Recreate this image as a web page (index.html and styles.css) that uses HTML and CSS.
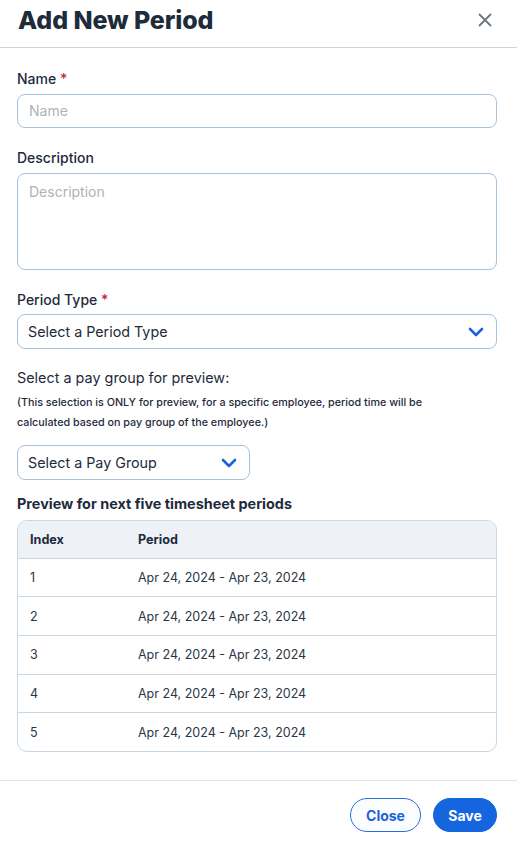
FILE: index.html
```html
<!DOCTYPE html>
<html lang="en">
<head>
<meta charset="utf-8">
<title>Add New Period</title>
<link rel="stylesheet" href="styles.css">
</head>
<body>
<div class="modal">
  <header class="modal-header">
    <h1 class="title">Add New Period</h1>
    <button class="close-x" aria-label="Close">
      <svg width="14" height="14" viewBox="0 0 14 14"><path d="M1.5 1.5 L12.5 12.5 M12.5 1.5 L1.5 12.5" stroke="#6f757d" stroke-width="1.8" stroke-linecap="round" fill="none"/></svg>
    </button>
  </header>
  <main class="modal-body">
    <div class="field">
      <label class="label">Name <span class="req">*</span></label>
      <div class="input"><span class="placeholder">Name</span></div>
    </div>
    <div class="field">
      <label class="label">Description</label>
      <div class="input textarea"><span class="placeholder">Description</span></div>
    </div>
    <div class="field field-tight">
      <label class="label">Period Type <span class="req">*</span></label>
      <div class="select"><span>Select a Period Type</span>
        <svg class="chev" width="16" height="10" viewBox="0 0 16 10"><path d="M2 2 L8 8 L14 2" stroke="#1a63db" stroke-width="2.6" stroke-linecap="round" stroke-linejoin="round" fill="none"/></svg>
      </div>
    </div>
    <p class="pg-title">Select a pay group for preview:</p>
    <p class="pg-note">(This selection is ONLY for preview, for a specific employee, period time will be calculated based on pay group of the employee.)</p>
    <div class="select select-small"><span>Select a Pay Group</span>
      <svg class="chev" width="16" height="10" viewBox="0 0 16 10"><path d="M2 2 L8 8 L14 2" stroke="#1a63db" stroke-width="2.6" stroke-linecap="round" stroke-linejoin="round" fill="none"/></svg>
    </div>
    <h2 class="preview-title">Preview for next five timesheet periods</h2>
    <div class="table-wrap">
      <table class="preview">
        <colgroup><col class="c-index"><col></colgroup>
        <thead><tr><th>Index</th><th>Period</th></tr></thead>
        <tbody>
          <tr><td>1</td><td>Apr 24, 2024 - Apr 23, 2024</td></tr>
          <tr><td>2</td><td>Apr 24, 2024 - Apr 23, 2024</td></tr>
          <tr><td>3</td><td>Apr 24, 2024 - Apr 23, 2024</td></tr>
          <tr><td>4</td><td>Apr 24, 2024 - Apr 23, 2024</td></tr>
          <tr><td>5</td><td>Apr 24, 2024 - Apr 23, 2024</td></tr>
        </tbody>
      </table>
    </div>
  </main>
  <footer class="modal-footer">
    <button class="btn btn-outline">Close</button>
    <button class="btn btn-primary">Save</button>
  </footer>
</div>
</body>
</html>
```
FILE: styles.css
```css
* { box-sizing: border-box; }
html, body { margin: 0; padding: 0; background: #ffffff; }
body {
  font-family: Inter, "Noto Sans", "Liberation Sans", sans-serif;
  color: #1e2b3b;
}
.modal { width: 517px; min-height: 848px; display: flex; flex-direction: column; }

.modal-header {
  height: 48px;
  padding: 6px 25px 0 18px;
  border-bottom: 1px solid #c9d7e3;
  display: flex;
  align-items: flex-start;
  justify-content: space-between;
}
.title {
  margin: 0;
  font-size: 25px;
  line-height: 28px;
  font-weight: 800;
  color: #1d2b3a;
  letter-spacing: -0.1px;
}
.close-x {
  border: 0;
  background: none;
  padding: 0;
  margin-top: 7px;
  width: 14px;
  height: 14px;
  display: flex;
}

.modal-body { padding: 21px 20px 0 17px; }

.field { margin-bottom: 20px; }
.field-tight { margin-bottom: 18px; }
.label {
  display: block;
  font-size: 14px;
  line-height: 20px;
  font-weight: 500;
  color: #1e2b3b;
  margin-bottom: 5px;
}
.field-tight .label { margin-bottom: 4px; }
.req { color: #c8234a; }

.input {
  height: 34px;
  border: 1px solid #a9c2d9;
  border-radius: 8px;
  padding: 0 11px;
  display: flex;
  align-items: center;
  font-size: 14px;
}
.textarea { height: 97px; align-items: flex-start; padding-top: 8px; }
.placeholder { color: #aeb3b9; line-height: 20px; }

.select {
  height: 35px;
  border: 1px solid #a9c2d9;
  border-radius: 8px;
  padding: 0 12px 0 10px;
  display: flex;
  align-items: center;
  justify-content: space-between;
  font-size: 14.3px;
  color: #1e2b3b;
}
.select-small { width: 233px; margin-top: 13px; }
.chev { display: block; }

.pg-title {
  margin: 0;
  font-size: 14.4px;
  line-height: 22px;
  color: #1e2b3b;
}
.pg-note {
  margin: 4px 0 0;
  font-size: 10.75px;
  line-height: 19.5px;
  font-weight: 500;
  color: #1e2b3b;
  max-width: 420px;
}
.preview-title {
  margin: 14px 0 6px;
  font-size: 14.4px;
  line-height: 20px;
  font-weight: 700;
  color: #1e2b3b;
}

.table-wrap {
  border: 1px solid #c6d7e5;
  border-radius: 10px;
  overflow: hidden;
}
.preview {
  width: 100%;
  border-collapse: collapse;
  table-layout: fixed;
  font-size: 12.5px;
}
.c-index { width: 108px; }
.preview th {
  background: #eef2f7;
  height: 37px;
  text-align: left;
  font-weight: 700;
  color: #1e2b3b;
  padding: 0 12px;
  font-size: 12.6px;
}
.preview td {
  height: 38.7px;
  padding: 0 12px;
  border-top: 1px solid #c6d7e5;
  color: #2a3646;
}

.modal-footer {
  margin-top: 28px;
  border-top: 1px solid #e1e3e6;
  padding: 17px 20px 16px;
  display: flex;
  justify-content: flex-end;
  gap: 12px;
}
.btn {
  height: 34px;
  border-radius: 17px;
  font-family: Inter, "Noto Sans", sans-serif;
  font-size: 14px;
  font-weight: 700;
  padding: 0;
  cursor: pointer;
}
.btn-outline {
  width: 71px;
  background: #fbfcfd;
  border: 1px solid #2a6fdc;
  color: #1d63d8;
}
.btn-primary {
  width: 64px;
  background: #1565de;
  border: 1px solid #1565de;
  color: #ffffff;
}
```
